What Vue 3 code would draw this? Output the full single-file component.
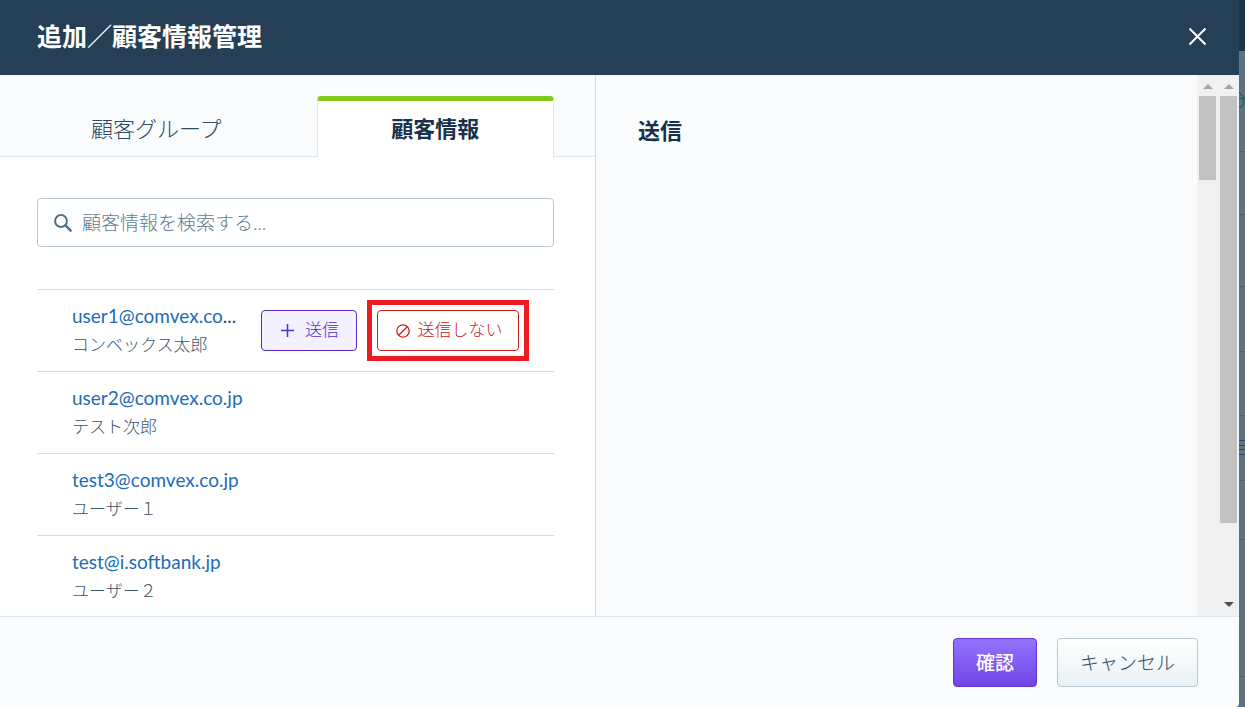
<script setup>
import { ref } from 'vue'

const query = ref('')
const customers = [
  { mail: 'user1@comvex.co', cut: true, name: 'コンベックス太郎', open: true },
  { mail: 'user2@comvex.co.jp', name: 'テスト次郎' },
  { mail: 'test3@comvex.co.jp', name: 'ユーザー１' },
  { mail: 'test@i.softbank.jp', name: 'ユーザー２' },
]
</script>

<template>
  <div class="page">
    <section class="dialog" role="dialog" aria-labelledby="dialog-title">
      <header class="head">
        <h1 id="dialog-title">追加／顧客情報管理</h1>
        <button class="close" type="button" aria-label="閉じる">
          <svg width="19" height="19" viewBox="0 0 19 19"><path d="M1.500 1.500L17.500 17.500M17.500 1.500L1.500 17.500" stroke="#fff" stroke-width="2" fill="none" /></svg>
        </button>
      </header>

      <div class="body">
        <div class="source">
          <div class="tabs" role="tablist">
            <button class="tab" type="button" role="tab" aria-selected="false">顧客グループ</button>
            <button class="tab active" type="button" role="tab" aria-selected="true">顧客情報</button>
          </div>

          <div class="panel" role="tabpanel">
            <div class="search">
              <svg width="20" height="20" viewBox="0 0 20 20" fill="none" stroke="#50708a">
                <circle cx="8" cy="8" r="5.9" stroke-width="2" />
                <path d="M12.2 12.2L18.4 18.4" stroke-width="2.5" />
              </svg>
              <input v-model="query" type="text" aria-label="顧客情報を検索する" placeholder="顧客情報を検索する..." />
            </div>

            <ul class="list">
              <li v-for="c in customers" :key="c.mail">
                <div class="who">
                  <div class="mail"><a href="#">{{ c.mail }}</a><span v-if="c.cut">...</span></div>
                  <div class="name">{{ c.name }}</div>
                </div>
                <div v-if="c.open" class="actions">
                  <button class="small send" type="button">
                    <svg width="13" height="13" viewBox="0 0 13 13"><path d="M6.5 0V13M0 6.5H13" stroke="currentColor" stroke-width="1.5" /></svg>
                    <span>送信</span>
                  </button>
                  <div class="marked">
                    <button class="small skip" type="button">
                      <svg width="14" height="14" viewBox="0 0 14 14" fill="none" stroke="currentColor" stroke-width="1.3"><circle cx="7" cy="7" r="6.2" /><path d="M2.7 11.3L11.3 2.7" /></svg>
                      <span>送信しない</span>
                    </button>
                  </div>
                </div>
              </li>
            </ul>
          </div>
        </div>

        <div class="target"><h2>送信</h2></div>

        <div class="rails" aria-hidden="true">
          <div class="rail"><i class="up"></i><span class="thumb short"></span></div>
          <div class="rail"><i class="up"></i><span class="thumb long"></span><i class="down"></i></div>
        </div>
      </div>

      <footer class="foot">
        <button class="btn primary" type="button">確認</button>
        <button class="btn" type="button">キャンセル</button>
      </footer>
    </section>

    <div class="backdrop" aria-hidden="true">
      <svg width="6" height="707" viewBox="0 0 6 707" fill="none">
        <path d="M0 0H6V51H0Z" fill="#1b354b" />
        <path d="M0 92L6 99M0 98.5H5M4.500 98V104L2 107H0" stroke="#28605f" stroke-width="1.3" />
        <path d="M0 151.5H6M0 214.500H6M0 286.500H6M0 351.500H6M0 415.500H6M0 480.500H6M0 539.500H6M0 676.500H6" stroke="#4f6274" />
        <path d="M0 440.5H6M0 445.5H6M0 449.5H6M0 454.5H6" stroke="#1e4a78" />
      </svg>
    </div>
  </div>
</template>

<style>
html,
body {
  margin: 0;
}
</style>

<style scoped>
* {
  box-sizing: border-box;
}
.page {
  display: flex;
  height: 100vh;
  overflow: hidden;
  background: #5f7282;
  color: #2c4a62;
  font-family: Lato, 'Noto Sans CJK JP', sans-serif;
}
button,
input {
  font: inherit;
  color: inherit;
}
button {
  padding: 0;
  border: 0;
  background: none;
}
.dialog {
  flex: 1;
  min-width: 0;
  display: flex;
  flex-direction: column;
  background: #fafbfd;
  border-bottom-right-radius: 4px;
}
.backdrop {
  width: 6px;
  overflow: hidden;
}
.backdrop svg {
  display: block;
}
.head {
  display: flex;
  align-items: center;
  justify-content: space-between;
  height: 75px;
  padding: 0 32px 2px 37px;
  background: #253f56;
  color: #fff;
}
h1 {
  margin: 0;
  padding-bottom: 4px;
  font-size: 25px;
  font-weight: 700;
}
.close svg,
.search svg,
.small svg {
  display: block;
}
.body {
  flex: 1;
  min-height: 0;
  display: flex;
  overflow: hidden;
}
.source {
  flex: 595;
  min-width: 0;
  background: #fff;
  border-right: 1px solid #d3dee5;
}
.target {
  flex: 601;
  min-width: 0;
}
h2 {
  margin: 40px 42px;
  font-size: 22px;
  line-height: 32px;
  font-weight: 700;
  color: #17324a;
}
.tabs {
  display: flex;
  height: 82px;
  padding: 21px 41px 0 0;
  background: #fafbfd;
  box-shadow: inset 0 -1px #dce6eb;
}
.tab {
  flex: 316;
  font-size: 22px;
  line-height: 32px;
  font-weight: 300;
  padding: 4px 4px 0 0;
}
.tab.active {
  flex: 238;
  padding: 0;
  font-weight: 700;
  color: #17324a;
  border: 1px solid #dce6eb;
  border-top: 5px solid #81ca1c;
  border-bottom: 0;
  border-radius: 4px 4px 0 0;
  background: #fff;
}
.panel {
  padding: 41px 41px 0 37px;
}
.search {
  display: flex;
  align-items: center;
  gap: 9px;
  height: 49px;
  padding: 0 15px;
  border: 1px solid #b9c8d3;
  border-radius: 4px;
}
.search input {
  flex: 1;
  min-width: 0;
  padding: 0;
  border: 0;
  outline: 0;
  background: none;
  font-size: 19px;
  font-weight: 300;
}
.search input::placeholder {
  color: #5f7b90;
  opacity: 1;
}
.list {
  list-style: none;
  margin: 42px 0 0;
  padding: 0;
}
li {
  display: flex;
  justify-content: space-between;
  height: 82px;
  padding: 10px 25px 0 35px;
  border-top: 1px solid #d3dfe6;
}
.who {
  flex: 1;
  min-width: 0;
  padding-top: 2px;
}
.mail {
  white-space: nowrap;
  font-size: 19px;
  line-height: 28px;
}
.mail a {
  color: #216bb8;
  text-decoration: none;
}
.name {
  font-size: 17px;
  line-height: 30px;
  font-weight: 300;
  color: #38566c;
  white-space: nowrap;
}
.actions {
  display: flex;
  gap: 10px;
  align-items: center;
  height: 61px;
  margin-left: 20px;
}
.small {
  display: flex;
  align-items: center;
  justify-content: center;
  height: 41px;
  padding-left: 2px;
  border: 1px solid currentColor;
  border-radius: 4px;
  font-size: 17px;
  font-weight: 300;
  white-space: nowrap;
}
.small span {
  padding-bottom: 4px;
}
.send {
  width: 96px;
  gap: 11px;
  color: #5a2cc6;
  background: #f3f0ff;
}
.marked {
  padding: 5px;
  border: 5px solid #ed1c24;
}
.skip {
  width: 142px;
  gap: 8px;
  color: #c62020;
  background: #fff;
}
.rails {
  display: flex;
  width: 42px;
  background: #f0f0f0;
}
.rail {
  flex: 1;
  display: flex;
  flex-direction: column;
  align-items: center;
  padding: 9px 0;
}
.up,
.down {
  border: 5px solid transparent;
  border-top: 0;
  border-bottom-color: #a3a3a3;
}
.down {
  margin-top: auto;
  border-top: 5px solid #505050;
  border-bottom: 0;
}
.thumb {
  width: 17px;
  margin-top: 7px;
  background: #c1c1c1;
}
.short {
  height: 84px;
}
.long {
  height: 427px;
}
.foot {
  display: flex;
  justify-content: flex-end;
  gap: 20px;
  padding: 21px 41px 20px;
  border-top: 1px solid #dae6ec;
}
.btn {
  height: 49px;
  padding: 0 22px 2px;
  border: 1px solid #b9c8d3;
  border-radius: 4px;
  background: linear-gradient(#fff, #e9f1f4);
  font-size: 19px;
  font-weight: 300;
}
.btn.primary {
  border-color: #6236cc;
  background: linear-gradient(#9673ff, #6f45e6);
  color: #fff;
  font-weight: 500;
}
</style>
